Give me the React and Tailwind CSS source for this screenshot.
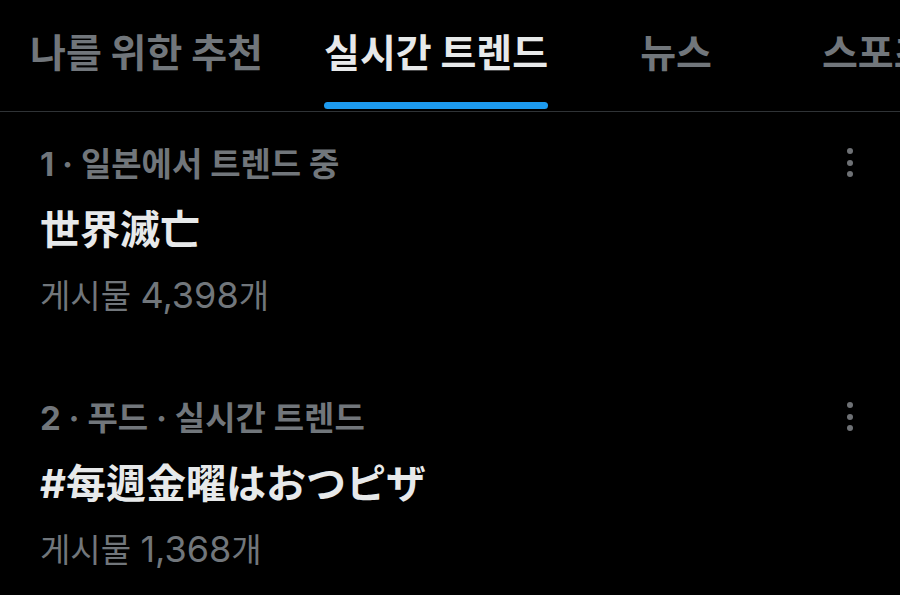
const KR = { fontFamily: '"Noto Sans CJK KR", "Noto Sans CJK JP", sans-serif' }
const MIXED = { fontFamily: 'Inter, "Noto Sans CJK KR", "Noto Sans CJK JP", sans-serif' }

const TABS = [
  { label: "나를 위한 추천", active: false, cls: "ml-[30px]" },
  { label: "실시간 트렌드", active: true, cls: "ml-[61px]" },
  { label: "뉴스", active: false, cls: "ml-[92px]" },
  { label: "스포츠", active: false, cls: "ml-[110px]" }
]

const TRENDS = [
  { meta: "1 · 일본에서 트렌드 중", title: "世界滅亡", count: "4,398" },
  { meta: "2 · 푸드 · 실시간 트렌드", title: "#每週金曜はおつピザ", count: "1,368" }
]

const MoreIcon = () => (
  <div className="flex flex-col items-center gap-[5.5px]">
    <span className="h-[6px] w-[6px] rounded-full bg-[#6e7175]" />
    <span className="h-[6px] w-[6px] rounded-full bg-[#6e7175]" />
    <span className="h-[6px] w-[6px] rounded-full bg-[#6e7175]" />
  </div>
)

export default function App() {
  return (
    <div className="h-[595px] w-[900px] overflow-hidden bg-black">
      {/* Tabs */}
      <div className="flex h-[112px] items-end overflow-hidden border-b border-[#2f3336] whitespace-nowrap" style={KR}>
        {TABS.map((tab) => (
          <div key={tab.label} className={`flex shrink-0 flex-col ${tab.cls}`}>
            <span
              className={`text-[39px] leading-none font-bold ${
                tab.active ? "text-[#e7e9ea]" : "text-[#71767b]"
              }`}
            >
              {tab.label}
            </span>
            <span
              className={`mt-[32px] mb-[2px] h-[7px] rounded-full ${tab.active ? "bg-[#1d9bf0]" : "bg-transparent"}`}
            />
          </div>
        ))}
      </div>

      {/* Trend list */}
      <div className="flex flex-col" style={MIXED}>
        {TRENDS.map((t) => (
          <div key={t.title} className="flex h-[254px] items-start justify-between pl-[40px] pr-[47px] pt-[36px]">
            <div className="flex flex-col whitespace-nowrap">
              <span className="text-[33px] leading-none font-bold text-[#71767b]">{t.meta}</span>
              <span className="mt-[29px] text-[40px] leading-none font-bold text-[#e7e9ea]">{t.title}</span>
              <span className="mt-[27px] text-[33px] leading-none text-[#71767b]">
                게시물 <span className="text-[36px]">{t.count}</span>개
              </span>
            </div>
            <MoreIcon />
          </div>
        ))}
      </div>
    </div>
  )
}
